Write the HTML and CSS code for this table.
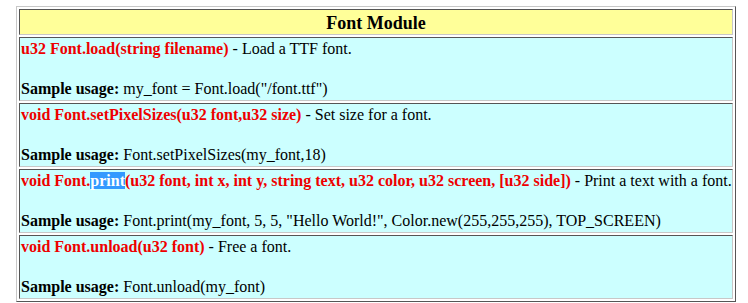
FILE: index.html
```html
<!DOCTYPE html>
<html lang="en">
<head>
  <meta charset="UTF-8" />
  <title>Font Module</title>
  <link rel="stylesheet" href="styles.css">
</head>
<body>
  <table class="module">
    <tr>
      <th class="module-title">Font Module</th>
    </tr>
    <tr>
      <td class="func">
        <b class="sig">u32 Font.load(string filename)</b> - Load a TTF font.<br><br>
        <b>Sample usage:</b> my_font = Font.load("/font.ttf")
      </td>
    </tr>
    <tr>
      <td class="func">
        <b class="sig">void Font.setPixelSizes(u32 font,u32 size)</b> - Set size for a font.<br><br>
        <b>Sample usage:</b> Font.setPixelSizes(my_font,18)
      </td>
    </tr>
    <tr>
      <td class="func">
        <b class="sig">void Font.<span class="picked">print</span>(u32 font, int x, int y, string text, u32 color, u32 screen, [u32 side])</b> - Print a text with a font.<br><br>
        <b>Sample usage:</b> Font.print(my_font, 5, 5, "Hello World!", Color.new(255,255,255), TOP_SCREEN)
      </td>
    </tr>
    <tr>
      <td class="func">
        <b class="sig">void Font.unload(u32 font)</b> - Free a font.<br><br>
        <b>Sample usage:</b> Font.unload(my_font)
      </td>
    </tr>
  </table>
</body>
</html>
```

FILE: styles.css
```css
:root {
  --yellow: #FFFF99;
  --cyan: #CCFFFF;
  --red: #EE0000;
  --dark: #555555;
  --light: #C8C8C8;
}

body {
  margin: 0;
  background: #FFFFFF;
  color: #000000;
  font-family: "Liberation Serif", "Times New Roman", serif;
  font-size: 16px;
}

.module {
  width: 720px;
  margin: 6px 0 0 16px;
  border-collapse: separate;
  border-spacing: 2px;
  border: 1px solid;
  border-color: var(--light) var(--dark) var(--dark) var(--light);
  table-layout: fixed;
}

.module th,
.module td {
  border: 1px solid;
  border-color: var(--dark) var(--light) var(--light) var(--dark);
  padding: 1px;
  white-space: nowrap;
  overflow: hidden;
}

.module .module-title {
  background: var(--yellow);
  height: 20px;
  padding-top: 3px;
  line-height: 20px;
  font-size: 18px;
  font-weight: bold;
  text-align: center;
}

.func {
  background: var(--cyan);
  line-height: 20px;
  text-align: left;
}

.sig {
  color: var(--red);
}

.picked {
  background: #3399FF;
  color: #FFFFFF;
}
```
